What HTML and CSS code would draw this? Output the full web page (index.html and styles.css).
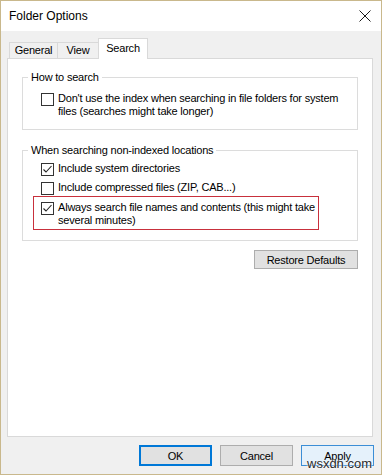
FILE: index.html
```html
<!DOCTYPE html>
<html lang="en">
<head>
  <meta charset="UTF-8" />
  <meta name="viewport" content="width=device-width, initial-scale=1.0" />
  <title>Folder Options</title>
  <link rel="stylesheet" href="styles.css">
</head>
<body>
  <div class="window">
    <div class="titlebar">
      <span class="title">Folder Options</span>
      <svg class="close" width="12" height="12" viewBox="0 0 12 12">
        <path d="M0.5 0.5 L11.5 11.5 M11.5 0.5 L0.5 11.5" stroke="#1a1a1a" stroke-width="1" fill="none" />
      </svg>
    </div>

    <div class="tabs">
      <div class="tab general">General</div>
      <div class="tab view">View</div>
      <div class="tab search active">Search</div>
    </div>

    <div class="panel">
      <div class="group first">
        <div class="legend">How to search</div>
        <div class="option">
          <span class="check"></span>
          <span class="label">Don't use the index when searching in file folders for system<br>files (searches might take longer)</span>
        </div>
      </div>

      <div class="group second">
        <div class="legend">When searching non-indexed locations</div>
        <div class="option">
          <span class="check">
            <svg width="11" height="11" viewBox="0 0 11 11"><path d="M1.5 5.5 L4 8 L9.5 2" stroke="#222" stroke-width="1.1" fill="none" /></svg>
          </span>
          <span class="label">Include system directories</span>
        </div>
        <div class="option">
          <span class="check"></span>
          <span class="label">Include compressed files (ZIP, CAB...)</span>
        </div>
        <div class="highlight">
          <div class="option">
            <span class="check">
              <svg width="11" height="11" viewBox="0 0 11 11"><path d="M1.5 5.5 L4 8 L9.5 2" stroke="#222" stroke-width="1.1" fill="none" /></svg>
            </span>
            <span class="label">Always search file names and contents (this might take<br>several minutes)</span>
          </div>
        </div>
      </div>

      <div class="panel-actions">
        <button class="btn restore">Restore Defaults</button>
      </div>
    </div>

    <div class="footer">
      <button class="btn default">OK</button>
      <button class="btn">Cancel</button>
      <button class="btn hover">Apply</button>
    </div>

    <span class="watermark">wsxdn.com</span>
  </div>
</body>
</html>
```

FILE: styles.css
```css
body {
  margin: 0;
  font-family: "Liberation Sans", Arial, sans-serif;
  font-size: 11px;
  letter-spacing: -0.2px;
  color: #000;
  background: #f0f0f0;
}
.window {
  position: relative;
  width: 382px;
  height: 475px;
  box-sizing: border-box;
  border: 1px solid #c9b88c;
  background: #f0f0f0;
  display: flex;
  flex-direction: column;
}
.titlebar {
  height: 30px;
  background: #fff;
  display: flex;
  align-items: center;
  justify-content: space-between;
  padding: 0 10px 0 8px;
}
.title {
  font-size: 12px;
  letter-spacing: 0;
}
.close {
  display: block;
}
.tabs {
  display: flex;
  align-items: flex-end;
  margin-top: 7px;
  padding-left: 8px;
  height: 20px;
}
.tab {
  box-sizing: border-box;
  height: 16px;
  line-height: 15px;
  text-align: center;
  border-top: 1px solid #d9d9d9;
  border-left: 1px solid #d9d9d9;
  background: #f0f0f0;
}
.general {
  width: 48px;
}
.view {
  width: 41px;
}
.search {
  width: 50px;
}
.tab.active {
  position: relative;
  z-index: 1;
  height: 21px;
  line-height: 19px;
  margin-bottom: -1px;
  background: #fff;
  border-right: 1px solid #d9d9d9;
}
.panel {
  height: 379px;
  box-sizing: border-box;
  margin: 0 8px 0 6px;
  padding: 0 14px;
  background: #fff;
  border: 1px solid #d9d9d9;
}
.group {
  border: 1px solid #dcdcdc;
}
.group.first {
  margin-top: 18px;
  padding-bottom: 11px;
}
.group.second {
  margin-top: 20px;
  padding-bottom: 10px;
}
.legend {
  width: fit-content;
  margin: -7px 0 0 5px;
  padding: 0 3px;
  line-height: 13px;
  background: #fff;
}
.option {
  display: flex;
  align-items: flex-start;
  padding-left: 18px;
  line-height: 13px;
}
.first .option {
  margin-top: 8px;
}
.second .option {
  margin-top: 5px;
}
.check {
  width: 13px;
  height: 13px;
  box-sizing: border-box;
  border: 1px solid #333;
  margin-top: 1px;
  margin-right: 4px;
  flex-shrink: 0;
  background: #fff;
}
.check svg {
  display: block;
}
.highlight {
  width: 286px;
  box-sizing: border-box;
  margin: 1px 0 0 10px;
  padding: 4px 0 2px 7px;
  border: 1px solid #c8303c;
}
.second .highlight .option {
  margin-top: 0;
  padding-left: 0;
}
.panel-actions {
  display: flex;
  justify-content: flex-end;
  margin-top: 9px;
}
.btn {
  font-family: inherit;
  font-size: 11px;
  letter-spacing: -0.2px;
  color: #000;
  background: #e1e1e1;
  border: 1px solid #adadad;
  border-radius: 0;
  padding: 0;
  margin: 0;
}
.restore {
  width: 104px;
  height: 19px;
}
.footer {
  display: flex;
  justify-content: flex-end;
  gap: 8px;
  padding: 8px 7px 0 0;
}
.footer .btn {
  width: 73px;
  height: 21px;
}
.btn.default {
  border: 2px solid #0078d7;
}
.btn.hover {
  background: #e5f1fb;
  border-color: #3c8ed6;
}
.watermark {
  position: absolute;
  left: 306px;
  top: 455px;
  font-size: 13px;
  letter-spacing: 0;
  line-height: 15px;
  color: #2a2a2a;
  text-shadow: 0 0 2px #fff, 0 0 2px #fff;
}
```
